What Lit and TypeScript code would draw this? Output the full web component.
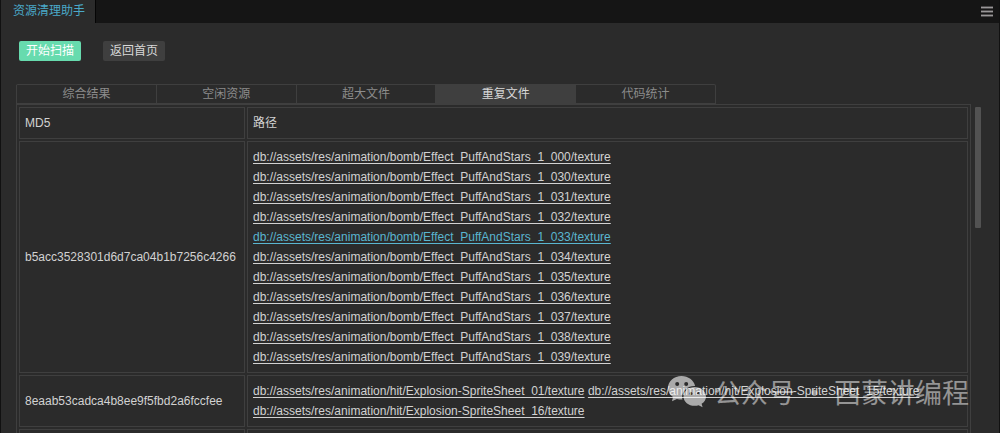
import { LitElement, html, css } from "lit";
import { customElement, state } from "lit/decorators.js";
import { classMap } from "lit/directives/class-map.js";

interface DuplicateGroup {
  md5: string;
  paths: string[];
}

const TABS = ["综合结果", "空闲资源", "超大文件", "重复文件", "代码统计"];

const BOMB = "db://assets/res/animation/bomb/Effect_PuffAndStars_1_";
const HIT = "db://assets/res/animation/hit/Explosion-SpriteSheet_";

const GROUPS: DuplicateGroup[] = [
  {
    md5: "b5acc3528301d6d7ca04b1b7256c4266",
    paths: ["000", "030", "031", "032", "033", "034", "035", "036", "037", "038", "039"].map(
      (n) => `${BOMB}${n}/texture`,
    ),
  },
  {
    md5: "8eaab53cadca4b8ee9f5fbd2a6fccfee",
    paths: ["01", "15", "16"].map((n) => `${HIT}${n}/texture`),
  },
  { md5: "", paths: [] },
];

@customElement("duplicate-table")
export class DuplicateTable extends LitElement {
  @state() private current = `${BOMB}033/texture`;

  static styles = css`
    :host {
      display: block;
    }
    .table {
      width: 100%;
      border: 1px solid #3f3f3f;
      border-collapse: separate;
      border-spacing: 2px;
      color: #d2d2d2;
      font-size: 12px;
      line-height: 20px;
    }
    .cell {
      box-sizing: border-box;
      height: 32px;
      padding: 5px;
      border: 1px solid #3f3f3f;
      text-align: left;
      font-weight: 400;
      vertical-align: middle;
    }
    .md5 {
      width: 226px;
    }
    .link {
      color: #d2d2d2;
      text-decoration: underline;
      text-underline-offset: 2px;
      text-decoration-skip-ink: none;
      white-space: nowrap;
    }
    .link.current {
      color: #5ab6d0;
    }
  `;

  private pick(e: Event, path: string) {
    e.preventDefault();
    this.current = path;
  }

  render() {
    return html`
      <table class="table">
        <thead>
          <tr>
            <th class="cell md5" scope="col">MD5</th>
            <th class="cell" scope="col">路径</th>
          </tr>
        </thead>
        <tbody>
          ${GROUPS.map(
            (g) => html`<tr>
              <td class="cell md5">${g.md5}</td>
              <td class="cell">
                ${g.paths.map(
                  (p) => html`<a
                      class=${classMap({ link: true, current: p === this.current })}
                      href="#"
                      @click=${(e: Event) => this.pick(e, p)}
                      >${p}</a
                    > `,
                )}
              </td>
            </tr>`,
          )}
        </tbody>
      </table>
    `;
  }
}

@customElement("app-root")
export class AppRoot extends LitElement {
  @state() private active = 3;

  static styles = css`
    :host {
      position: relative;
      display: flex;
      flex-direction: column;
      box-sizing: border-box;
      height: 100vh;
      overflow: hidden;
      border-left: 1px solid #111111;
      border-right: 1px solid #111111;
      background: #2b2b2b;
      font-family: "Liberation Sans", "Noto Sans CJK SC", sans-serif;
      font-size: 12px;
    }
    button {
      margin: 0;
      padding: 0;
      border: 0;
      background: none;
      font: inherit;
      cursor: pointer;
    }
    .titlebar {
      display: flex;
      flex: none;
      justify-content: space-between;
      height: 23px;
      background: #151515;
    }
    .title {
      padding: 0 10px 0 12px;
      border-right: 1px solid #050505;
      background: #2b2b2b;
      color: #4aa9c9;
      line-height: 23px;
    }
    .menu {
      display: flex;
      align-items: center;
      padding: 0 6px;
    }
    .actions {
      display: flex;
      flex: none;
      gap: 22px;
      padding: 18px;
    }
    .action {
      width: 62px;
      height: 20px;
      border-radius: 2px;
      background: #3f3f3f;
      color: #d8d8d8;
      line-height: 20px;
    }
    .action.primary {
      background: #67dbae;
      color: #ffffff;
    }
    .body {
      display: flex;
      flex: 1;
      align-items: flex-start;
      gap: 4px;
      min-height: 0;
      padding: 5px 18px 0 15px;
    }
    .panel {
      flex: 1;
      min-width: 0;
    }
    .tabs {
      display: grid;
      grid-template-columns: repeat(5, 1fr);
      box-sizing: border-box;
      max-width: 700px;
      height: 20px;
      border: solid #3f3f3f;
      border-width: 1px 1px 1px 0;
      border-radius: 2px 2px 0 0;
    }
    .tabs .tab {
      border-left: 1px solid #3f3f3f;
      color: #8c8c8c;
      line-height: 18px;
    }
    .tabs .tab.active {
      background: #3f3f3f;
      color: #d8d8d8;
    }
    .thumb {
      flex: none;
      width: 6px;
      height: 121px;
      margin-top: 23px;
      border-radius: 1px;
      background: #525252;
    }
    .watermark {
      position: absolute;
      right: 30px;
      bottom: 22px;
      display: flex;
      align-items: center;
      gap: 8px;
      color: rgba(255, 255, 255, 0.5);
      font-family: "Noto Sans CJK SC", sans-serif;
      font-size: 27px;
      line-height: 38px;
      white-space: pre;
      pointer-events: none;
    }
    .logo {
      opacity: 0.6;
    }
  `;

  render() {
    return html`
      <header class="titlebar">
        <span class="title">资源清理助手</span>
        <button class="menu" aria-label="menu">
          <svg width="12" height="11" viewBox="0 0 12 11" shape-rendering="crispEdges">
            <path fill="#4c4a4b" d="M0 0h12v3H0zM0 4h12v3H0zM0 8h12v3H0z" />
            <path fill="#999798" d="M0 1h12v1H0zM0 5h12v1H0zM0 9h12v1H0z" />
          </svg>
        </button>
      </header>
      <div class="actions">
        <button class="action primary">开始扫描</button>
        <button class="action">返回首页</button>
      </div>
      <main class="body">
        <div class="panel">
          <div class="tabs" role="tablist">
            ${TABS.map(
              (t, i) => html`<button
                class=${classMap({ tab: true, active: i === this.active })}
                role="tab"
                aria-selected=${i === this.active ? "true" : "false"}
                @click=${() => (this.active = i)}
              >
                ${t}
              </button>`,
            )}
          </div>
          <duplicate-table></duplicate-table>
        </div>
        <div class="thumb"></div>
      </main>
      <div class="watermark">
        <svg class="logo" width="38" height="32" viewBox="0 0 38 32">
          <path
            fill="#fff"
            fill-rule="evenodd"
            d="M13.500 0C6 0 0 5.300 0 11.900c0 3.700 1.900 6.900 5 9.100L4 25.300l4.900-2.400c1.600.5 3.100.7 4.800.7h.8a9.800 9.800 0 0 1-.4-2.700c0-6.100 5.600-11 12.400-11h.6C25.800 4.200 20.200 0 13.500 0zM9.200 6a2 2 0 1 1 0 4 2 2 0 0 1 0-4zm9 0a2 2 0 1 1 0 4 2 2 0 0 1 0-4z"
          />
          <path
            fill="#fff"
            fill-rule="evenodd"
            d="M26.700 11C20.500 11 15.500 15.200 15.500 20.400s5 9.400 11.200 9.400c1.400 0 2.700-.2 3.900-.6l4 2.100-1-3.500c2.700-1.700 4.400-4.400 4.400-7.400 0-5.200-5-9.400-11.300-9.400zm-3.800 4.900a1.600 1.600 0 1 1 0 3.200 1.600 1.600 0 0 1 0-3.200zm7.500 0a1.600 1.600 0 1 1 0 3.200 1.600 1.600 0 0 1 0-3.200z"
          />
        </svg>
        <span>公众号 · 西蒙讲编程</span>
      </div>
    `;
  }
}
